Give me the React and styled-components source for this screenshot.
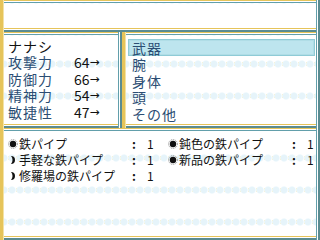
import React from 'react';
import styled, { createGlobalStyle } from 'styled-components';

const GlobalStyle = createGlobalStyle`
  html, body {
    margin: 0;
    padding: 0;
    background: #fff;
  }
  body {
    font-family: "Noto Sans CJK JP", "Noto Sans", sans-serif;
  }
  #root {
    width: 320px;
    height: 240px;
    overflow: hidden;
  }
`;

const gold = '#e6c45a';
const teal = '#629fab';
const darkTeal = '#5a8b91';

const Screen = styled.div`
  width: 320px;
  height: 240px;
  display: grid;
  grid-template-columns: 122px 198px;
  grid-template-rows: 32px 96px 112px;
`;

const Window = styled.div`
  box-sizing: border-box;
  background-color: #fff;
  background-image:
    radial-gradient(circle at 4px 16px, #e6f4fa 2.8px, #eef8fc 3.4px, transparent 4px),
    radial-gradient(circle at 0px 16px, #f7f1cf 1.6px, transparent 2.2px);
  background-size: 8px 32px;
  background-position: 0 ${(p) => p.$laceY ?? -16}px;
  box-shadow:
    inset 3px 0 0 ${gold},
    inset 4px 0 0 #f3e2a6,
    inset -2px 0 0 ${darkTeal},
    inset -3px 0 0 #fff,
    inset -4px 0 0 ${teal},
    inset 0 1px 0 ${gold},
    inset 0 2px 0 #fff,
    inset 0 3px 0 ${teal},
    inset 0 -2px 0 ${darkTeal},
    inset 0 -3px 0 #fff,
    inset 0 -4px 0 ${gold};
`;

const HelpWindow = styled(Window)`
  grid-column: 1 / 3;
`;

const StatusWindow = styled(Window)`
  padding: 5.5px 0 0 8px;
  font-size: 14px;
  line-height: 16.5px;
  letter-spacing: 1px;
`;

const ActorName = styled.div`
  color: #111;
`;

const ParamRow = styled.div`
  display: grid;
  grid-template-columns: 66px auto;
  white-space: nowrap;
`;

const ParamLabel = styled.span`
  color: #2b4d73;
`;

const ParamValue = styled.span`
  color: #111;
  display: flex;
  align-items: center;
  letter-spacing: 0;
`;

const Arrow = styled.span`
  font-family: "DejaVu Sans", sans-serif;
  font-size: 12px;
  line-height: 1;
`;

const SlotWindow = styled(Window)`
  padding: 7px 5px 0 6px;
  font-size: 14px;
  line-height: 16.5px;
  letter-spacing: 1px;
`;

const SlotRow = styled.div`
  box-sizing: border-box;
  height: 16.5px;
  padding: 1.5px 0 0 4px;
  line-height: 15px;
  color: #2b4d73;
  background: ${(p) => (p.$active ? '#bde5ee' : 'transparent')};
  box-shadow: ${(p) =>
    p.$active ? 'inset 0 0 0 1px #8fcbd6, inset 0 0 0 2px #b0dde6' : 'none'};
`;

const ItemWindow = styled(Window)`
  grid-column: 1 / 3;
  padding-top: 8px;
  display: grid;
  grid-template-columns: 160px 160px;
  grid-auto-rows: 16px;
  align-content: start;
  font-size: 12px;
  line-height: 16px;
  color: #111;
`;

const ItemCell = styled.div`
  display: grid;
  grid-template-columns: 124px 15px auto;
  padding-left: 8px;
  white-space: nowrap;
`;

const ItemName = styled.span`
  display: flex;
  align-items: center;
  gap: 1px;
`;

const Colon = styled.span`
  font-weight: bold;
`;

const IconBox = styled.svg`
  width: 10px;
  height: 10px;
  flex: none;
`;

const SunIcon = () => (
  <IconBox viewBox="0 0 10 10">
    <circle cx="5" cy="5" r="4.4" fill="none" stroke="#888" strokeWidth="1" strokeDasharray="1 1" />
    <circle cx="5" cy="5" r="3.2" fill="#111" />
  </IconBox>
);

const MoonIcon = () => (
  <IconBox viewBox="0 0 10 10">
    <path d="M3 1 A4 4 0 0 1 3 9 A6 6 0 0 0 3 1 Z" fill="#111" />
  </IconBox>
);

const params = [
  { label: '攻撃力', value: 64 },
  { label: '防御力', value: 66 },
  { label: '精神力', value: 54 },
  { label: '敏捷性', value: 47 },
];

const slots = ['武器', '腕', '身体', '頭', 'その他'];

const items = [
  { name: '鉄パイプ', icon: 'sun', count: 1 },
  { name: '鈍色の鉄パイプ', icon: 'sun', count: 1 },
  { name: '手軽な鉄パイプ', icon: 'moon', count: 1 },
  { name: '新品の鉄パイプ', icon: 'sun', count: 1 },
  { name: '修羅場の鉄パイプ', icon: 'moon', count: 1 },
];

const App = () => (
  <>
    <GlobalStyle />
    <Screen>
      <HelpWindow />
      <StatusWindow>
        <ActorName>ナナシ</ActorName>
        {params.map((p) => (
          <ParamRow key={p.label}>
            <ParamLabel>{p.label}</ParamLabel>
            <ParamValue>
              {p.value}
              <Arrow>→</Arrow>
            </ParamValue>
          </ParamRow>
        ))}
      </StatusWindow>
      <SlotWindow>
        {slots.map((s, i) => (
          <SlotRow key={s} $active={i === 0}>
            {s}
          </SlotRow>
        ))}
      </SlotWindow>
      <ItemWindow $laceY={-18}>
        {items.map((it) => (
          <ItemCell key={it.name}>
            <ItemName>
              {it.icon === 'sun' ? <SunIcon /> : <MoonIcon />}
              {it.name}
            </ItemName>
            <Colon>:</Colon>
            <span>{it.count}</span>
          </ItemCell>
        ))}
      </ItemWindow>
    </Screen>
  </>
);

export default App;
